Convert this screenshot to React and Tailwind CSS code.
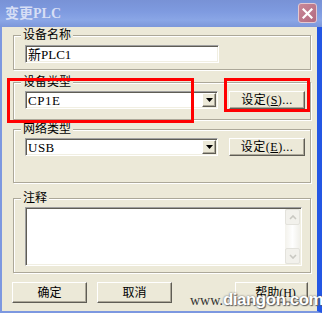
import React from "react";

const CN = { fontFamily: '"Liberation Serif","Noto Sans CJK SC",serif' };

function Sunken({ className = "", children }) {
  return (
    <div
      className={
        "border border-t-[#a0a0a0] border-l-[#a0a0a0] border-b-white border-r-white shadow-[inset_1px_1px_0_#5f5d55,inset_-1px_-1px_0_#f1efe2] bg-white " +
        className
      }
    >
      {children}
    </div>
  );
}

function Raised({ className = "", children }) {
  return (
    <div
      className={
        "flex items-center justify-center bg-[#ece9d8] border border-t-white border-l-white border-b-[#5f5d55] border-r-[#5f5d55] shadow-[inset_-1px_-1px_0_#aca899] text-[12px] text-black " +
        className
      }
      style={CN}
    >
      {children}
    </div>
  );
}

function Group({ label, className = "", children }) {
  return (
    <div
      className={
        "relative border border-[#aca899] shadow-[inset_1px_1px_0_#ffffff,1px_1px_0_#ffffff] " +
        className
      }
    >
      <div
        className="absolute left-[7px] top-[-8px] h-[15px] px-[2px] bg-[#ece9d8] text-[12px] leading-[15px] text-black"
        style={CN}
      >
        {label}
      </div>
      {children}
    </div>
  );
}

function Combo({ value }) {
  return (
    <Sunken className="w-[193px] h-[18px] flex items-center justify-between pl-[2px] pr-[1px]">
      <span className="text-[13px] leading-none text-black tracking-[0.5px]" style={CN}>
        {value}
      </span>
      <Raised className="w-[14px] h-[14px]">
        <svg width="7" height="4" viewBox="0 0 7 4">
          <path d="M0 0H7L3.5 4Z" fill="#000" />
        </svg>
      </Raised>
    </Sunken>
  );
}

export default function App() {
  return (
    <div className="w-[322px] h-[313px] flex flex-col bg-[#ece9d8] overflow-hidden relative">
      {/* title bar */}
      <div className="h-[27px] shrink-0 flex items-center justify-between pl-[5px] pr-[5px] bg-[linear-gradient(180deg,#7892d6_0%,#7f9be0_45%,#8aa6e6_75%,#7c97da_100%)]">
        <span className="text-[14px] font-bold text-[#d6def5]" style={CN}>
          变更PLC
        </span>
        <div className="w-[19px] h-[20px] mt-[-1px] rounded-[3px] border border-[#e4c8d0] bg-[linear-gradient(135deg,#c98898,#b26a80)] flex items-center justify-center">
          <svg width="11" height="11" viewBox="0 0 11 11">
            <path d="M1.5 1.5L9.5 9.5M9.5 1.5L1.5 9.5" stroke="#ffffff" strokeWidth="2.2" strokeLinecap="square" />
          </svg>
        </div>
      </div>

      {/* body */}
      <div className="flex-1 flex flex-col border-l-2 border-l-[#7d98e0] border-r-[5px] border-r-[#2457e4] border-b-2 border-b-[#7d98e0] pl-[11px] pr-[6px] pt-[8px]">
        <Group label="设备名称" className="h-[35px] pl-[11px] pt-[9px]">
          <Sunken className="w-[194px] h-[18px] flex items-center pl-[2px]">
            <span className="text-[13px] leading-none text-black" style={CN}>新PLC1</span>
          </Sunken>
        </Group>

        <Group label="设备类型" className="mt-[12px] h-[38px] pl-[11px] pt-[8px]">
          <div className="flex items-center gap-[11px]">
            <Combo value="CP1E" />
            <Raised className="w-[76px] h-[18px] tracking-[0.5px]">设定(<span className="underline">S</span>)...</Raised>
          </div>
        </Group>

        <Group label="网络类型" className="mt-[9px] h-[54px] pl-[11px] pt-[8px]">
          <div className="flex items-center gap-[11px]">
            <Combo value="USB" />
            <Raised className="w-[76px] h-[18px] tracking-[0.5px]">设定(<span className="underline">E</span>)...</Raised>
          </div>
        </Group>

        <Group label="注释" className="mt-[15px] h-[75px] pl-[11px] pt-[8px]">
          <Sunken className="w-[277px] h-[59px] flex justify-end pr-[1px] pt-[1px] pb-[1px]">
            <div className="w-[15px] h-full flex flex-col justify-between bg-[linear-gradient(90deg,#f3f2ec,#fefefe,#f0efe9)]">
              <div className="h-[16px] rounded-[2px] border border-[#e3e2dc] bg-[#f2f1ec] flex items-center justify-center">
                <svg width="8" height="5" viewBox="0 0 8 5">
                  <path d="M1 4L4 1L7 4" stroke="#c9c8c2" strokeWidth="1.6" fill="none" />
                </svg>
              </div>
              <div className="h-[16px] rounded-[2px] border border-[#e3e2dc] bg-[#f2f1ec] flex items-center justify-center">
                <svg width="8" height="5" viewBox="0 0 8 5">
                  <path d="M1 1L4 4L7 1" stroke="#c9c8c2" strokeWidth="1.6" fill="none" />
                </svg>
              </div>
            </div>
          </Sunken>
        </Group>

        <div className="mt-[9px] flex items-center">
          <Raised className="w-[75px] h-[21px] ml-[-1px]">确定</Raised>
          <Raised className="w-[75px] h-[21px] ml-[10px]">取消</Raised>
          <Raised className="w-[73px] h-[21px] ml-auto mr-[3px] pl-[8px]">帮助(H)</Raised>
        </div>
      </div>

      {/* red highlight boxes */}
      <div className="absolute left-[7px] top-[78px] w-[187px] h-[45px] border-[3px] border-[#ff0000]" />
      <div className="absolute left-[224px] top-[78px] w-[86px] h-[34px] border-[3px] border-[#ff0000]" />

      {/* watermark */}
      <div className="absolute left-[190px] top-[290px] flex items-end whitespace-nowrap pointer-events-none">
        <span className="text-[14px] leading-[18px] text-[#333333]" style={{ fontFamily: '"Liberation Serif",serif' }}>
          www.
        </span>
        <span
          className="text-[17px] leading-[20px] font-bold text-white [text-shadow:0_0_2px_#555,1px_1px_1px_#666] tracking-[-0.5px]"
          style={{ fontFamily: '"Liberation Sans",sans-serif' }}
        >
          diangon.com
        </span>
      </div>
    </div>
  );
}
